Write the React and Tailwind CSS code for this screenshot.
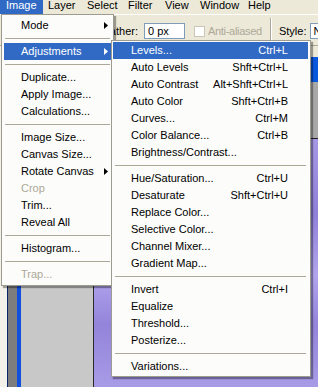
import React from 'react';

const mainItems = [
    { label: 'Mode', arrow: true },
    { sep: true },
    { label: 'Adjustments', arrow: true, active: true },
    { sep: true },
    { label: 'Duplicate...' },
    { label: 'Apply Image...' },
    { label: 'Calculations...' },
    { sep: true },
    { label: 'Image Size...' },
    { label: 'Canvas Size...' },
    { label: 'Rotate Canvas', arrow: true },
    { label: 'Crop', disabled: true },
    { label: 'Trim...' },
    { label: 'Reveal All' },
    { sep: true },
    { label: 'Histogram...' },
    { sep: true },
    { label: 'Trap...', disabled: true },
];

const subItems = [
    { label: 'Levels...', key: 'Ctrl+L', active: true },
    { label: 'Auto Levels', key: 'Shft+Ctrl+L' },
    { label: 'Auto Contrast', key: 'Alt+Shft+Ctrl+L' },
    { label: 'Auto Color', key: 'Shft+Ctrl+B' },
    { label: 'Curves...', key: 'Ctrl+M' },
    { label: 'Color Balance...', key: 'Ctrl+B' },
    { label: 'Brightness/Contrast...' },
    { sep: true },
    { label: 'Hue/Saturation...', key: 'Ctrl+U' },
    { label: 'Desaturate', key: 'Shft+Ctrl+U' },
    { label: 'Replace Color...' },
    { label: 'Selective Color...' },
    { label: 'Channel Mixer...' },
    { label: 'Gradient Map...' },
    { sep: true },
    { label: 'Invert', key: 'Ctrl+I' },
    { label: 'Equalize' },
    { label: 'Threshold...' },
    { label: 'Posterize...' },
    { sep: true },
    { label: 'Variations...' },
];

const menuBar = [
    { label: 'Image', w: 'w-[43px] pl-[6px]', active: true },
    { label: 'Layer', w: 'w-[39px] pl-[5px]' },
    { label: 'Select', w: 'w-[41px] pl-[5px]' },
    { label: 'Filter', w: 'w-[37px] pl-[5px]' },
    { label: 'View', w: 'w-[35px] pl-[5px]' },
    { label: 'Window', w: 'w-[48px] pl-[5px]' },
    { label: 'Help', w: 'w-[32px] pl-[5px]' },
];

function Arrow({ white }) {
    return (
        <svg width="4" height="7" viewBox="0 0 4 7" className="shrink-0">
            <polygon points="0,0 4,3.5 0,7" fill={white ? '#ffffff' : '#000000'} />
        </svg>
    );
}

function Separator({ inset }) {
    return (
        <div className={`h-[9px] flex items-center ${inset}`}>
            <div className="h-px w-full bg-[#aca899]" />
        </div>
    );
}

export default function App() {
    return (
        <div className="relative w-[318px] h-[387px] overflow-hidden bg-[#ece9d8] font-['Liberation_Sans',Arial,sans-serif] text-[11px] text-black flex flex-col">
            {/* menu bar, cut at the top */}
            <div className="h-[14px] shrink-0 overflow-hidden">
                <div className="-mt-[4px] flex h-[18px] leading-[18px]">
                    {menuBar.map((m) => (
                        <div
                            key={m.label}
                            className={`${m.w} shrink-0 ${m.active ? 'bg-[#316ac5] text-white' : ''}`}
                        >
                            {m.label}
                        </div>
                    ))}
                </div>
            </div>

            {/* options bar */}
            <div className="h-[32px] shrink-0 overflow-hidden whitespace-nowrap border-t border-white border-b border-b-[#aca899] flex items-center pt-[2px] pl-[97px]">
                <span className="shrink-0">Feather:</span>
                <div className="ml-[6px] w-[41px] h-[16px] shrink-0 border border-[#7f9db9] bg-white pl-[3px] leading-[14px]">0 px</div>
                <div className="ml-[9px] w-[11px] h-[11px] shrink-0 border border-[#c9c7ba] bg-white" />
                <span className="ml-[3px] w-[56px] shrink-0 overflow-visible text-[#aca899] tracking-[-0.3px]">Anti-aliased</span>
                <div className="ml-[6px] w-[2px] h-[26px] shrink-0 border-l border-[#aca899] border-r border-r-white" />
                <span className="ml-[7px] shrink-0">Style:</span>
                <div className="ml-[4px] w-[60px] h-[16px] shrink-0 border border-[#7f9db9] bg-white pl-[2px] leading-[14px]">Normal</div>
            </div>

            {/* workspace */}
            <div className="flex flex-1">
                <div className="w-[7px] bg-[#f3f2ea]" />
                <div className="w-px bg-[#0a246a]" />
                <div className="w-[9px] bg-[#7d7d7d]" />
                <div className="w-[4px] bg-[#1150dc]" />
                <div className="w-[72px] bg-[#c8c8c8]" />
                <div className="w-px bg-[#2a2a2a]" />
                <div className="flex flex-1 flex-col">
                    <div className="h-[11px] bg-[#ece9d8]" />
                    <div className="h-[25px] bg-[#0a58dc]" />
                    <div className="h-[56px] bg-[#a8a8a8]" />
                    <div className="h-px bg-[#202020]" />
                    <div className="flex-1 bg-[linear-gradient(180deg,#a697e4_0%,#8f80d8_30%,#b1a4ec_55%,#9384da_75%,#a89be6_100%)]" />
                </div>
            </div>

            {/* Image menu */}
            <div className="absolute left-[1px] top-[14px] w-[113px] border border-[#9d9b90] bg-[#fcfcfa] p-[2px] shadow-[2px_2px_1px_rgba(0,0,0,0.35)]">
                {mainItems.map((it, i) =>
                    it.sep ? (
                        <Separator key={i} inset="mx-[1px]" />
                    ) : (
                        <div
                            key={i}
                            className={`flex h-[17px] items-center justify-between pl-[17px] pr-[3px] ${
                                it.active ? 'bg-[#316ac5] text-white' : it.disabled ? 'text-[#aca899]' : ''
                            }`}
                        >
                            <span>{it.label}</span>
                            {it.arrow && <Arrow white={it.active} />}
                        </div>
                    )
                )}
            </div>

            {/* Adjustments submenu */}
            <div className="absolute left-[111px] top-[40px] w-[200px] border border-[#9d9b90] bg-[#fcfcfa] pl-[1px] pr-[2px] py-[1px] shadow-[2px_2px_1px_rgba(0,0,0,0.35)]">
                {subItems.map((it, i) =>
                    it.sep ? (
                        <Separator key={i} inset="mx-[2px]" />
                    ) : (
                        <div
                            key={i}
                            className={`flex h-[17px] items-center justify-between pl-[18px] pr-[20px] ${
                                it.active ? 'bg-[#316ac5] text-white' : ''
                            }`}
                        >
                            <span>{it.label}</span>
                            {it.key && <span>{it.key}</span>}
                        </div>
                    )
                )}
            </div>
        </div>
    );
}
